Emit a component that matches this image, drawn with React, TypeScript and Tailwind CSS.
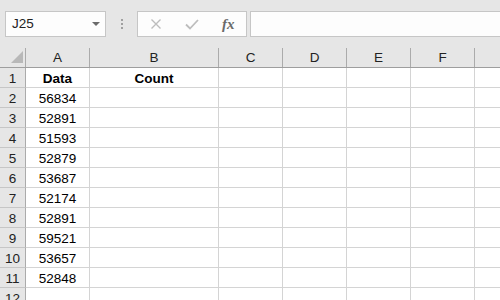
import React from "react";

const cols = [
  { l: "A", w: "w-[64px]" },
  { l: "B", w: "w-[129px]" },
  { l: "C", w: "w-[64px]" },
  { l: "D", w: "w-[64px]" },
  { l: "E", w: "w-[64px]" },
  { l: "F", w: "w-[64px]" },
  { l: "", w: "w-[64px]" },
];

const data = ["56834", "52891", "51593", "52879", "53687", "52174", "52891", "59521", "53657", "52848"];

export default function App() {
  const rows: { n: number; a: string; b: string; bold?: boolean }[] = [
    { n: 1, a: "Data", b: "Count", bold: true },
    ...data.map((d, i) => ({ n: i + 2, a: d, b: "" })),
    { n: 12, a: "", b: "" },
  ];
  return (
    <div className="w-[500px] h-[300px] overflow-hidden bg-[#e6e6e6] text-black" style={{ fontFamily: '"Liberation Sans", Arial, sans-serif' }}>
      {/* toolbar */}
      <div className="h-[48px] flex items-start pt-[11px] pl-[5px]">
        <div className="w-[101px] h-[26px] border border-[#c6c6c6] bg-[#fdfdfd] flex items-center justify-between pl-[6px] pr-[5px]">
          <span className="text-[13.5px] text-[#222]">J25</span>
          <svg width="8" height="5" viewBox="0 0 8 5"><polygon points="0,0 8,0 4,4" fill="#6b6b6b" /></svg>
        </div>
        <div className="w-[31px] h-[26px] flex flex-col items-center justify-center gap-[2px]">
          <div className="w-[2px] h-[2px] bg-[#a0a0a0]" />
          <div className="w-[2px] h-[2px] bg-[#a0a0a0]" />
          <div className="w-[2px] h-[2px] bg-[#a0a0a0]" />
        </div>
        <div className="w-[110px] h-[26px] border border-[#c6c6c6] bg-[#fdfdfd] flex items-center pl-[12px]">
          <svg width="12" height="12" viewBox="0 0 12 12"><path d="M1.5 1.5 L10.5 10.5 M10.5 1.5 L1.5 10.5" stroke="#bdbdbd" strokeWidth="1.4" /></svg>
          <svg className="ml-[23px]" width="14" height="11" viewBox="0 0 14 11"><path d="M1 5.5 L5 9.5 L13 1" stroke="#bdbdbd" strokeWidth="1.8" fill="none" /></svg>
          <span className="ml-[23px] text-[15px] italic font-bold text-[#6a6a6a] leading-none" style={{ fontFamily: '"Liberation Serif", serif' }}>fx</span>
        </div>
        <div className="ml-[3px] flex-1 h-[26px] border border-[#c6c6c6] border-r-0 bg-[#fdfdfd]" />
      </div>
      {/* header row */}
      <div className="flex h-[20px] border-b border-[#9e9e9e]">
        <div className="w-[26px] shrink-0 border-r border-[#ababab] relative">
          <svg className="absolute left-[11px] top-[3px]" width="12" height="12" viewBox="0 0 12 12"><polygon points="12,0 12,12 0,12" fill="#b8b8b8" /></svg>
        </div>
        {cols.map((c, i) => (
          <div key={i} className={`${c.w} shrink-0 border-r border-[#ababab] flex items-center justify-center pt-[2px] text-[13.5px] text-[#222]`}>
            {c.l}
          </div>
        ))}
      </div>
      {rows.map((r) => (
        <div key={r.n} className="flex h-[20px]">
          <div className="w-[26px] shrink-0 border-r border-b border-[#c6c6c6] border-r-[#ababab] flex items-center justify-center pt-[3px] text-[13.5px] text-[#222]">
            {r.n}
          </div>
          {cols.map((c, i) => (
            <div
              key={i}
              className={`${c.w} shrink-0 border-r border-b border-[#d4d4d4] bg-white flex items-center justify-center pt-[3px] text-[13.5px] ${r.bold ? "font-bold" : ""}`}
            >
              {i === 0 ? r.a : i === 1 ? r.b : ""}
            </div>
          ))}
        </div>
      ))}
    </div>
  );
}
